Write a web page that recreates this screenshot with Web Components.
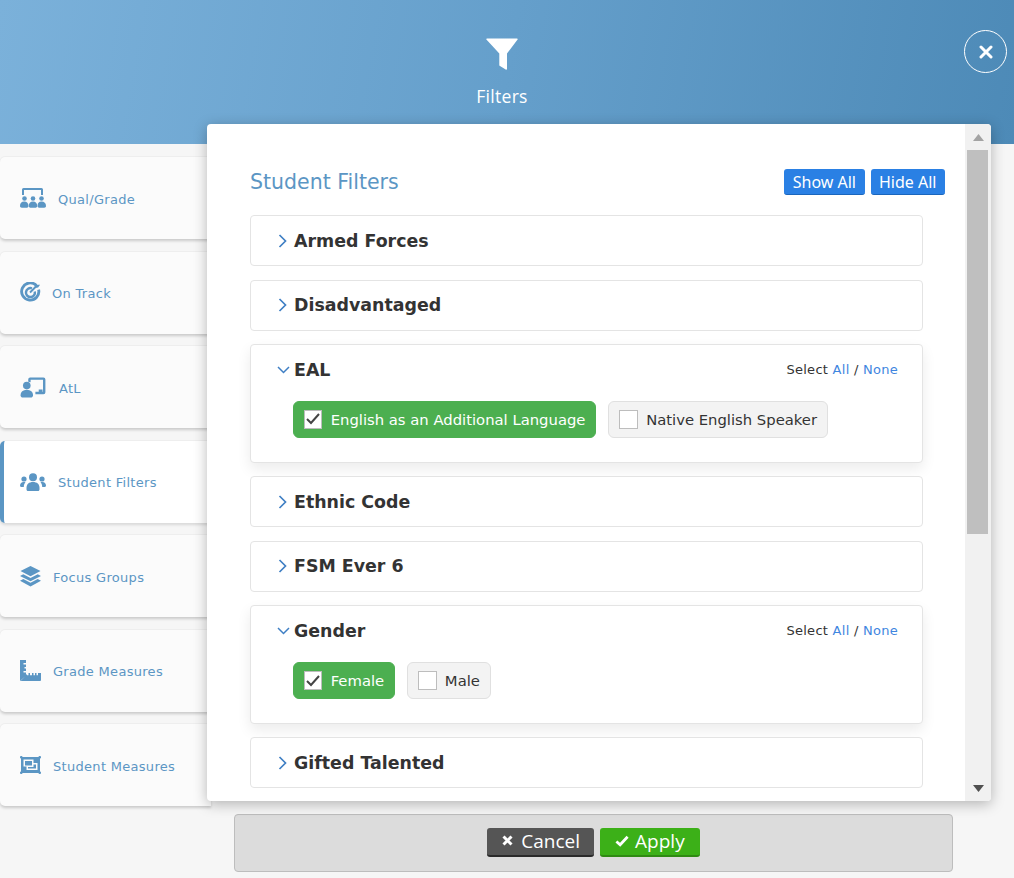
<!DOCTYPE html>
<html>
<head>
<meta charset="utf-8">
<title>Filters</title>
<style>
    html, body { margin: 0; height: 100%; background: #f6f6f6; }
    body { font-family: "DejaVu Sans", "Liberation Sans", sans-serif; overflow: hidden; }
</style>
</head>
<body>
<filters-page>
    <filter-header slot="header" title-text="Filters"></filter-header>

    <nav-card slot="nav" icon="qual" label="Qual/Grade"></nav-card>
    <nav-card slot="nav" icon="track" label="On Track"></nav-card>
    <nav-card slot="nav" icon="atl" label="AtL"></nav-card>
    <nav-card slot="nav" icon="students" label="Student Filters" active></nav-card>
    <nav-card slot="nav" icon="layers" label="Focus Groups"></nav-card>
    <nav-card slot="nav" icon="ruler" label="Grade Measures"></nav-card>
    <nav-card slot="nav" icon="measure" label="Student Measures"></nav-card>

    <filter-panel slot="panel" heading="Student Filters">
        <filter-group label="Armed Forces"></filter-group>
        <filter-group label="Disadvantaged"></filter-group>
        <filter-group label="EAL" open>
            <filter-chip checked>English as an Additional Language</filter-chip>
            <filter-chip>Native English Speaker</filter-chip>
        </filter-group>
        <filter-group label="Ethnic Code"></filter-group>
        <filter-group label="FSM Ever 6"></filter-group>
        <filter-group label="Gender" open>
            <filter-chip checked>Female</filter-chip>
            <filter-chip>Male</filter-chip>
        </filter-group>
        <filter-group label="Gifted Talented"></filter-group>
    </filter-panel>

    <filter-footer slot="footer"></filter-footer>
</filters-page>

<script>
const ICONS = {
    qual: `<svg viewBox="0 0 26 22" width="26" height="22" fill="#5b96c4">
        <path d="M2 8V2.500A1.500 1.500 0 0 1 3.500 1h18A1.500 1.500 0 0 1 23 2.500V8h-2V3H4v5z"/>
        <circle cx="4.500" cy="11.500" r="2.300"/><circle cx="13" cy="11.500" r="2.300"/><circle cx="21.500" cy="11.500" r="2.300"/>
        <path d="M0 19c0-3 1.500-4.500 4.200-4.500S8.500 16 8.500 19c0 1-.8 1.700-1.500 1.700H1.700C.8 20.700 0 20 0 19z"/>
        <path d="M8.800 19c0-3 1.500-4.500 4.200-4.500s4.200 1.500 4.200 4.500c0 1-.8 1.700-1.500 1.700h-5.400c-.7 0-1.500-.7-1.500-1.700z"/>
        <path d="M17.500 19c0-3 1.300-4.500 4-4.500S26 16 26 19c0 1-.8 1.700-1.700 1.700H19c-.7 0-1.500-.7-1.500-1.700z"/>
    </svg>`,
    track: `<svg viewBox="0 0 22 22" width="21" height="21" fill="none" stroke="#5b96c4">
        <path d="M17 3.500A9 9 0 1 0 19.500 8" stroke-width="3"/>
        <path d="M12.500 6.700A4.700 4.700 0 1 0 15.500 10" stroke-width="2.600"/>
        <path d="M10.500 11L17 4.500" stroke-width="2"/>
        <path d="M15.500 4.500L16 1l2 2 3-.2-2 3-3.500.5z" fill="#5b96c4" stroke="none"/>
    </svg>`,
    atl: `<svg viewBox="0 0 26 22" width="26" height="21" fill="#5b96c4">
        <path d="M8 2.500A2 2 0 0 1 10 .5h14a2 2 0 0 1 2 2V16a2 2 0 0 1-2 2h-8.500v-2.500H19V13h4v2.500h.5V3H10.500v2.500L8 5z"/>
        <circle cx="6.500" cy="9" r="4"/>
        <path d="M0 19c0-3.500 2.500-5.500 6.500-5.500S13 15.500 13 19c0 1.500-1 2.500-2.500 2.500h-8C1 21.500 0 20.500 0 19z"/>
    </svg>`,
    students: `<svg viewBox="0 0 26 18" width="26" height="18" fill="#5b96c4">
        <circle cx="13" cy="4.200" r="4"/><circle cx="4" cy="6" r="2.600"/><circle cx="22" cy="6" r="2.600"/>
        <path d="M6.500 15c0-4 2.500-6 6.500-6s6.500 2 6.500 6v1.500c0 .8-.6 1.500-1.500 1.500H8c-.9 0-1.500-.7-1.500-1.500z"/>
        <path d="M5.500 9.300C4 11 3.800 12.500 3.800 14H1.200C.5 14 0 13.500 0 12.800 0 10.500 1.500 9 3.500 9c.8 0 1.500.1 2 .3z"/>
        <path d="M20.500 9.300C22 11 22.200 12.500 22.200 14h2.600c.7 0 1.200-.5 1.200-1.200C26 10.500 24.500 9 22.500 9c-.8 0-1.500.1-2 .3z"/>
    </svg>`,
    layers: `<svg viewBox="0 0 21 21" width="21" height="21" fill="#5b96c4">
        <path d="M10.500 0L20.500 5 10.500 10.200 .5 5z"/>
        <path d="M3.300 8.200L10.500 12l7.200-3.800L21 10 10.500 15.300 0 10z"/>
        <path d="M3.300 13l7.200 3.800 7.200-3.800 3.300 1.700-10.500 5.800L0 14.700z"/>
    </svg>`,
    ruler: `<svg viewBox="0 0 21 21" width="21" height="21" fill="#5b96c4">
        <path d="M0 0h6v3H3.500v1.500H6V7H4.500v1.500H6V11H3.500v1.500H6v2.500l1-1v1.200h1.500V13H10v2.200h2V13h1.500v2.200h1.500V13h1.500v2.200H18V13h3v7c0 .5-.5 1-1 1H.5L5 16.500 0 21z"/>
    </svg>`,
    measure: `<svg viewBox="0 0 21 18" width="21" height="18" fill="#5b96c4">
        <path fill-rule="evenodd" d="M1 1h19v16H1zM3.500 3.500v7h3v3.500h11V7h-4V3.500zM5 5h7v4.500H5zM8 11h5.500V8.500H16V12.500H8z"/>
        <rect width="2.500" height="2.500" rx="1"/><rect x="18.500" width="2.500" height="2.500" rx="1"/>
        <rect y="15.500" width="2.500" height="2.500" rx="1"/><rect x="18.500" y="15.500" width="2.500" height="2.500" rx="1"/>
    </svg>`
};

class FiltersPage extends HTMLElement {
    constructor() {
        super();
        this.attachShadow({ mode: 'open' });
        this.shadowRoot.innerHTML = `
            <style>
                :host { display: block; height: 878px; overflow: hidden; }
                .main { display: flex; align-items: flex-start; }
                .nav { flex: 0 0 207px; display: flex; flex-direction: column; gap: 12.500px; padding-top: 13px; }
                .right { flex: 1; min-width: 0; margin-top: -20px; position: relative; }
                .foot { padding: 13px 61px 0 27px; }
            </style>
            <slot name="header"></slot>
            <div class="main">
                <div class="nav"><slot name="nav"></slot></div>
                <div class="right">
                    <div class="panel-wrap"><slot name="panel"></slot></div>
                    <div class="foot"><slot name="footer"></slot></div>
                </div>
            </div>
        `;
    }
}

class FilterHeader extends HTMLElement {
    constructor() {
        super();
        this.attachShadow({ mode: 'open' });
        this.shadowRoot.innerHTML = `
            <style>
                :host {
                    display: flex; height: 144px; box-sizing: border-box; color: #fff;
                    background: linear-gradient(100deg, #7bb1da 0%, #659fcb 50%, #4d8ab7 100%);
                    flex-direction: column; align-items: center; padding: 37px 10px 0 0; position: relative;
                }
                svg { display: block; }
                .title { font: 17.500px "Open Sans", sans-serif; margin-top: 13px; line-height: 24px; letter-spacing: .3px; }
                button {
                    position: absolute; right: 7px; top: 30px; width: 43px; height: 43px; border-radius: 50%;
                    border: 1px solid #fff; background: none; padding: 0; display: flex;
                    align-items: center; justify-content: center;
                }
            </style>
            <svg width="34" height="34" viewBox="0 0 34 34" fill="#fff">
                <path d="M2 1.500h30c.6 0 .9.6.6 1.100L22 16.500V32c0 .8-.8 1-1.300.6l-5.700-3.500c-.4-.3-.7-.7-.7-1.200V16.500L1.400 2.600C1 2.100 1.400 1.500 2 1.500z"/>
            </svg>
            <div class="title">${this.getAttribute('title-text')}</div>
            <button aria-label="Close">
                <svg width="14" height="14" viewBox="0 0 14 14" stroke="#fff" stroke-width="3" stroke-linecap="round"><path d="M2 2l10 10M12 2L2 12"/></svg>
            </button>
        `;
    }
}

class NavCard extends HTMLElement {
    constructor() {
        super();
        this.attachShadow({ mode: 'open' });
        const gap = { qual: 12, track: 11, atl: 13, students: 12, layers: 12, ruler: 12, measure: 12 }[this.getAttribute('icon')];
        this.shadowRoot.innerHTML = `
            <style>
                :host {
                    display: flex; align-items: center; height: 82px; box-sizing: border-box; padding: 0 0 0 20px;
                    background: #fbfbfb; border-radius: 5px 0 0 5px; color: #5b96c4; margin-right: -4px;
                    font-size: 13px; letter-spacing: .3px; box-shadow: 0 2px 3px rgba(0,0,0,.18), 0 -1px 1px rgba(0,0,0,.03); gap: ${gap}px;
                }
                :host([active]) {
                    background: #fff; border-left: 4px solid #5b96c4; padding-left: 16px;
                    box-shadow: 0 2px 3px rgba(0,0,0,.12), 0 -1px 1px rgba(0,0,0,.03);
                }
                svg { display: block; flex: none; }
                span { padding-top: 2px; }
            </style>
            ${ICONS[this.getAttribute('icon')]}
            <span>${this.getAttribute('label')}</span>
        `;
    }
}

class FilterPanel extends HTMLElement {
    constructor() {
        super();
        this.attachShadow({ mode: 'open' });
        this.shadowRoot.innerHTML = `
            <style>
                :host {
                    display: flex; height: 677px; margin-right: 23px; background: #fff; border-radius: 4px;
                    box-shadow: 0 3px 14px rgba(0,0,0,.28); overflow: hidden; position: relative; z-index: 1;
                }
                .scroll { flex: 1; min-width: 0; padding: 44px 42px 0 43px; overflow: hidden; }
                .top { display: flex; align-items: center; height: 28px; margin-bottom: 19px; margin-right: -22px; }
                h2 { flex: 1; margin: 0; font-size: 20.500px; font-weight: 400; color: #5b96c4; }
                .list { display: flex; flex-direction: column; gap: 13.600px; }
                .btn {
                    font: 16px "Noto Sans", sans-serif; color: #fff; background: #2a80e4; border: 0; height: 26px; padding: 0 8.500px;
                    border-radius: 3px; border-bottom: 1px solid #1a66bd; margin-left: 6px;
                }
                .bar { flex: 0 0 26px; background: #f1f1f1; display: flex; flex-direction: column; }
                .arrow { flex: 0 0 26px; display: flex; align-items: center; justify-content: center; }
                .thumb { width: 21px; height: 384px; margin-left: 2px; background: #bfbfbf; }
                .rest { flex: 1; }
            </style>
            <div class="scroll">
                <div class="top">
                    <h2>${this.getAttribute('heading')}</h2>
                    <button class="btn">Show All</button>
                    <button class="btn">Hide All</button>
                </div>
                <div class="list"><slot></slot></div>
            </div>
            <div class="bar">
                <div class="arrow"><svg width="11" height="7" viewBox="0 0 11 7" fill="#a3a3a3"><path d="M5.500 0L11 7H0z"/></svg></div>
                <div class="thumb"></div>
                <div class="rest"></div>
                <div class="arrow"><svg width="11" height="7" viewBox="0 0 11 7" fill="#505050"><path d="M0 0h11L5.500 7z"/></svg></div>
            </div>
        `;
    }
}

class FilterGroup extends HTMLElement {
    constructor() {
        super();
        this.attachShadow({ mode: 'open' });
        const open = this.hasAttribute('open');
        this.shadowRoot.innerHTML = `
            <style>
                :host {
                    display: block; border: 1px solid #e4e4e4; border-radius: 4px; background: #fff; box-sizing: border-box;
                }
                :host([open]) { box-shadow: 0 6px 14px rgba(0,0,0,.08); }
                .row { display: flex; align-items: center; height: 49px; padding: 0 24px 0 26px; }
                .chev { flex: none; width: 17px; display: flex; }
                .name { flex: 1; font-size: 17.400px; font-weight: 700; color: #333; }
                .sel { font-size: 13px; letter-spacing: .27px; color: #333; }
                .sel a { color: #3f86e0; }
                .body { display: flex; gap: 12px; padding: 7px 0 24px 42px; }
            </style>
            <div class="row">
                <span class="chev">${open
                    ? '<svg width="13" height="8" viewBox="0 0 13 8" fill="none" stroke="#3f7fc4" stroke-width="1.500"><path d="M1 1l5.500 5.500L12 1"/></svg>'
                    : '<svg width="9" height="14" viewBox="0 0 9 14" fill="none" stroke="#3f7fc4" stroke-width="1.700" style="margin-left:1px"><path d="M1.500 1l6 6-6 6"/></svg>'}</span>
                <span class="name">${this.getAttribute('label')}</span>
                ${open ? '<span class="sel">Select <a>All</a> / <a>None</a></span>' : ''}
            </div>
            ${open ? '<div class="body"><slot></slot></div>' : ''}
        `;
    }
}

class FilterChip extends HTMLElement {
    constructor() {
        super();
        this.attachShadow({ mode: 'open' });
        this.shadowRoot.innerHTML = `
            <style>
                :host {
                    display: inline-flex; align-items: center; height: 36.400px; box-sizing: border-box; padding: 0 10px 0 9.700px;
                    gap: 8.300px; border: 1px solid #e0e0e0; border-radius: 6px; background: #f3f3f3; color: #333; font-size: 14.800px;
                }
                :host([checked]) { background: #4caf50; border-color: #4caf50; color: #fff; }
                .box { box-sizing: border-box; width: 18.700px; height: 19px; background: #fff; border: 1px solid #bdbdbd; display: flex; align-items: center; justify-content: center; }
            </style>
            <span class="box">${this.hasAttribute('checked')
                ? '<svg width="14" height="12" viewBox="0 0 14 12" fill="none" stroke="#444" stroke-width="2"><path d="M1 6l4 4 8-9"/></svg>' : ''}</span>
            <span><slot></slot></span>
        `;
    }
}

class FilterFooter extends HTMLElement {
    constructor() {
        super();
        this.attachShadow({ mode: 'open' });
        this.shadowRoot.innerHTML = `
            <style>
                :host {
                    display: flex; height: 58px; box-sizing: border-box; justify-content: center; align-items: center; gap: 6px;
                    background: #dcdcdc; border: 1px solid #bdbdbd; border-radius: 4px; padding-bottom: 1px;
                }
                button {
                    display: flex; align-items: center; height: 29px; border: 0; border-radius: 3px; color: #fff;
                    font: 19px "Open Sans", sans-serif; padding: 0 14px 2px 15px; box-sizing: border-box;
                }
                .c { background: #555; border-bottom: 2px solid #2a2a2a; gap: 8px; }
                .a { background: #3cb018; border-bottom: 2px solid #2f8a13; gap: 6px; padding-right: 15px; }
            </style>
            <button class="c"><svg width="11" height="11" viewBox="0 0 11 11" stroke="#fff" stroke-width="3"><path d="M1.500 1.500l8 8M9.500 1.500l-8 8"/></svg>Cancel</button>
            <button class="a"><svg width="14" height="12" viewBox="0 0 15 12" fill="none" stroke="#fff" stroke-width="3"><path d="M1.500 6.500l4 3.500 8-8.500"/></svg>Apply</button>
        `;
    }
}

customElements.define('filters-page', FiltersPage);
customElements.define('filter-header', FilterHeader);
customElements.define('nav-card', NavCard);
customElements.define('filter-panel', FilterPanel);
customElements.define('filter-group', FilterGroup);
customElements.define('filter-chip', FilterChip);
customElements.define('filter-footer', FilterFooter);
</script>
</body>
</html>
